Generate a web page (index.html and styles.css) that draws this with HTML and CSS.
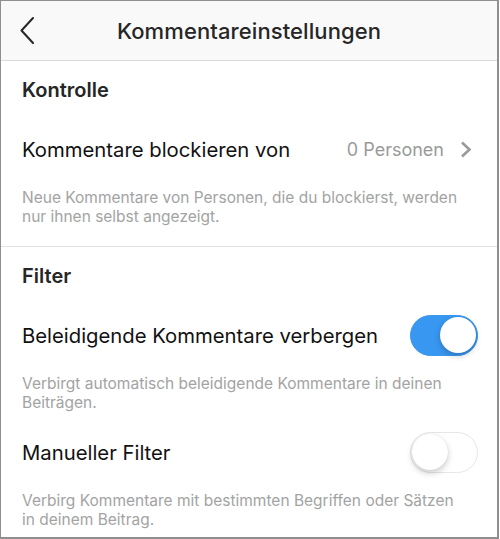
FILE: index.html
```html
<!DOCTYPE html>
<html>
	<head>
		<meta charset="UTF-8">
		<title>Kommentareinstellungen</title>
		<link rel="stylesheet" href="styles.css">
	</head>
	<body>
		<div class="frame">
			<div class="header">
				<div class="back">
					<svg width="14" height="27" viewBox="0 0 14 27"><path d="M13 1 L1.5 13.5 L13 26" fill="none" stroke="#262626" stroke-width="2" stroke-linecap="round" stroke-linejoin="round"/></svg>
				</div>
				<div class="title">Kommentareinstellungen</div>
				<div class="back"></div>
			</div>
			<div class="section first">
				<div class="stitle">Kontrolle</div>
				<div class="row">
					<div class="label">Kommentare blockieren von</div>
					<div class="value">0 Personen
						<svg width="12" height="17" viewBox="0 0 12 17"><path d="M2 1.5 L9.5 8.5 L2 15.5" fill="none" stroke="#9a9a9a" stroke-width="2.6"/></svg>
					</div>
				</div>
				<div class="desc">Neue Kommentare von Personen, die du blockierst, werden nur ihnen selbst angezeigt.</div>
			</div>
			<div class="section">
				<div class="stitle">Filter</div>
				<div class="row">
					<div class="label">Beleidigende Kommentare verbergen</div>
					<div class="switch on"><div class="knob"></div></div>
				</div>
				<div class="desc">Verbirgt automatisch beleidigende Kommentare in deinen Beiträgen.</div>
				<div class="row">
					<div class="label">Manueller Filter</div>
					<div class="switch"><div class="knob"></div></div>
				</div>
				<div class="desc">Verbirg Kommentare mit bestimmten Begriffen oder Sätzen in deinem Beitrag.</div>
			</div>
		</div>
	</body>
</html>
```

FILE: styles.css
```css
*{
	margin:0;padding:0;
	box-sizing:border-box;
}
body{
	background:#fff;
	font-family:Inter,"Liberation Sans",sans-serif;
	color:#262626;
}
.frame{
	width:499px;
	height:539px;
	border:1px solid #8f8f8f;
	border-right-width:2px;
	border-bottom-width:2px;
	overflow:hidden;
	background:#fff;
}
.header{
	height:60px;
	background:#f9f9f9;
	border-bottom:1px solid #dbdbdb;
	display:flex;
	align-items:center;
	justify-content:space-between;
	padding:0 19px;
}
.back{
	width:40px;
	display:flex;
	align-items:center;
}
.title{
	font-size:22px;
	font-weight:500;
	letter-spacing:0.1px;
}
.section{
	padding:0 19px 0 21px;
}
.section.first{
	border-bottom:1px solid #e3e3e3;
	padding-bottom:10px;
}
.stitle{
	height:58px;
	line-height:58px;
	font-size:20px;
	font-weight:600;
}
.row{
	height:60px;
	display:flex;
	align-items:center;
	justify-content:space-between;
}
.label{
	font-size:20.3px;
	color:#111;
}
.value{
	font-size:18px;
	color:#9a9a9a;
	display:flex;
	align-items:center;
	gap:16px;
	margin-right:6px;
}
.desc{
	font-size:15.5px;
	line-height:19px;
	color:#a3a3a3;
	padding:9px 20px 10px 0;
}
.switch{
	width:68px;
	height:41px;
	border-radius:21px;
	border:1.5px solid #e6e6e6;
	background:#fff;
	position:relative;
}
.switch.on{
	background:#3897f0;
	border-color:#3897f0;
}
.knob{
	position:absolute;
	left:1px;
	top:1px;
	width:36px;
	height:36px;
	border-radius:50%;
	background:#fff;
	box-shadow:0 3px 6px rgba(0,0,0,0.2),0 0 1px rgba(0,0,0,0.15);
}
.switch.on .knob{
	left:auto;
	right:1px;
}
```
